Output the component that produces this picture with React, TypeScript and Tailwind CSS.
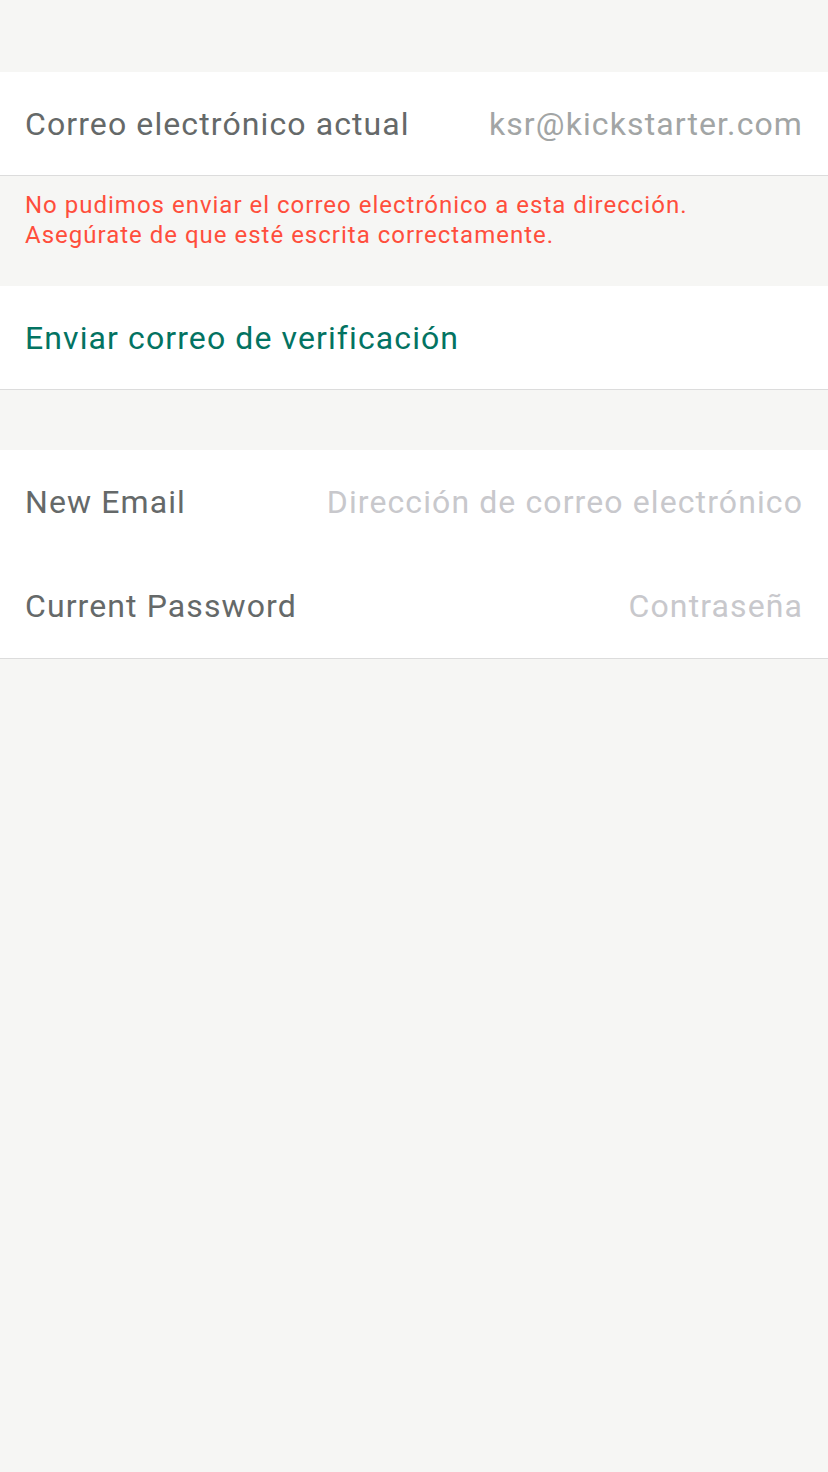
import React from 'react';

const font = { fontFamily: 'Roboto, "Liberation Sans", sans-serif' };

function Row({ label, value, valueClass }: { label: string; value: string; valueClass: string }) {
  return (
    <div className="flex h-[104px] items-center justify-between px-[25px]">
      <span className="text-[32px] text-[#656969] tracking-[1.1px]">{label}</span>
      <span className={`text-[32px] tracking-[1.1px] ${valueClass}`}>{value}</span>
    </div>
  );
}

export default function App() {
  return (
    <div className="min-h-[1472px] w-full bg-[#f6f6f4]" style={font}>
      <div className="h-[72px]" />

      <div className="border-b border-[#dcdcdc] bg-white">
        <div className="flex h-[103px] items-center justify-between px-[25px]">
          <span className="text-[32px] text-[#656969] tracking-[1.1px]">Correo electrónico actual</span>
          <span className="text-[32px] text-[#a2a5a5] tracking-[1.1px]">ksr@kickstarter.com</span>
        </div>
      </div>

      <div className="flex h-[110px] flex-col px-[25px] pt-[14px] text-[24px] leading-[30px] tracking-[1px] text-[#ff4e3c]">
        <p>No pudimos enviar el correo electrónico a esta dirección.</p>
        <p>Asegúrate de que esté escrita correctamente.</p>
      </div>

      <div className="border-b border-[#dcdcdc] bg-white">
        <div className="flex h-[103px] items-center px-[25px]">
          <span className="text-[32px] text-[#037362] tracking-[1.1px]">Enviar correo de verificación</span>
        </div>
      </div>

      <div className="h-[60px]" />

      <div className="border-b border-[#dcdcdc] bg-white">
        <Row label="New Email" value="Dirección de correo electrónico" valueClass="text-[#c8c8cc]" />
        <Row label="Current Password" value="Contraseña" valueClass="text-[#c8c8cc]" />
      </div>
    </div>
  );
}
